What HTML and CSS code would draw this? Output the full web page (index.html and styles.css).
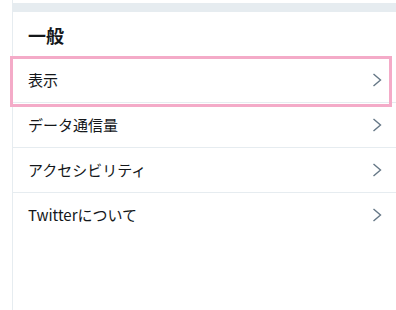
FILE: index.html
```html
<!DOCTYPE html>
<html lang="ja">
<head>
<meta charset="utf-8">
<link rel="stylesheet" href="styles.css">
</head>
<body>
<div class="page">
  <div class="topbar"></div>
  <div class="header">一般</div>
  <div class="list">
    <div class="row"><span class="label">表示</span><svg class="chev" viewBox="0 0 10 14" width="10" height="14"><polyline points="1.5,1 8.5,7 1.5,13"/></svg></div>
    <div class="row"><span class="label">データ通信量</span><svg class="chev" viewBox="0 0 10 14" width="10" height="14"><polyline points="1.5,1 8.5,7 1.5,13"/></svg></div>
    <div class="row"><span class="label">アクセシビリティ</span><svg class="chev" viewBox="0 0 10 14" width="10" height="14"><polyline points="1.5,1 8.5,7 1.5,13"/></svg></div>
    <div class="row"><span class="label">Twitterについて</span><svg class="chev" viewBox="0 0 10 14" width="10" height="14"><polyline points="1.5,1 8.5,7 1.5,13"/></svg></div>
  </div>
  <div class="highlight"></div>
</div>
</body>
</html>
```
FILE: styles.css
```css
html, body {
  margin: 0;
  padding: 0;
  background: #ffffff;
}
body {
  font-family: "Noto Sans CJK JP", "Noto Sans", sans-serif;
  color: #14171a;
}
.page {
  position: relative;
  margin-left: 12px;
  border-left: 1px solid #e6ecf0;
  min-height: 310px;
  box-sizing: border-box;
  padding-top: 3px;
}
.topbar {
  height: 9px;
  background: #e6ecf0;
}
.header {
  font-size: 18px;
  font-weight: 700;
  line-height: 24px;
  padding: 11px 15px 11px;
}
.row {
  display: flex;
  align-items: center;
  justify-content: space-between;
  padding: 12px 14px 12px 15px;
  font-size: 15px;
  line-height: 20px;
  border-bottom: 1px solid #e6ecf0;
}
.row:last-child {
  border-bottom: none;
}
.chev {
  display: block;
  fill: none;
  stroke: #657786;
  stroke-width: 1.4;
}
.highlight {
  position: absolute;
  left: -3px;
  top: 56px;
  width: 382px;
  height: 51px;
  box-sizing: border-box;
  border: 3px solid #f4abc8;
  pointer-events: none;
}
```
